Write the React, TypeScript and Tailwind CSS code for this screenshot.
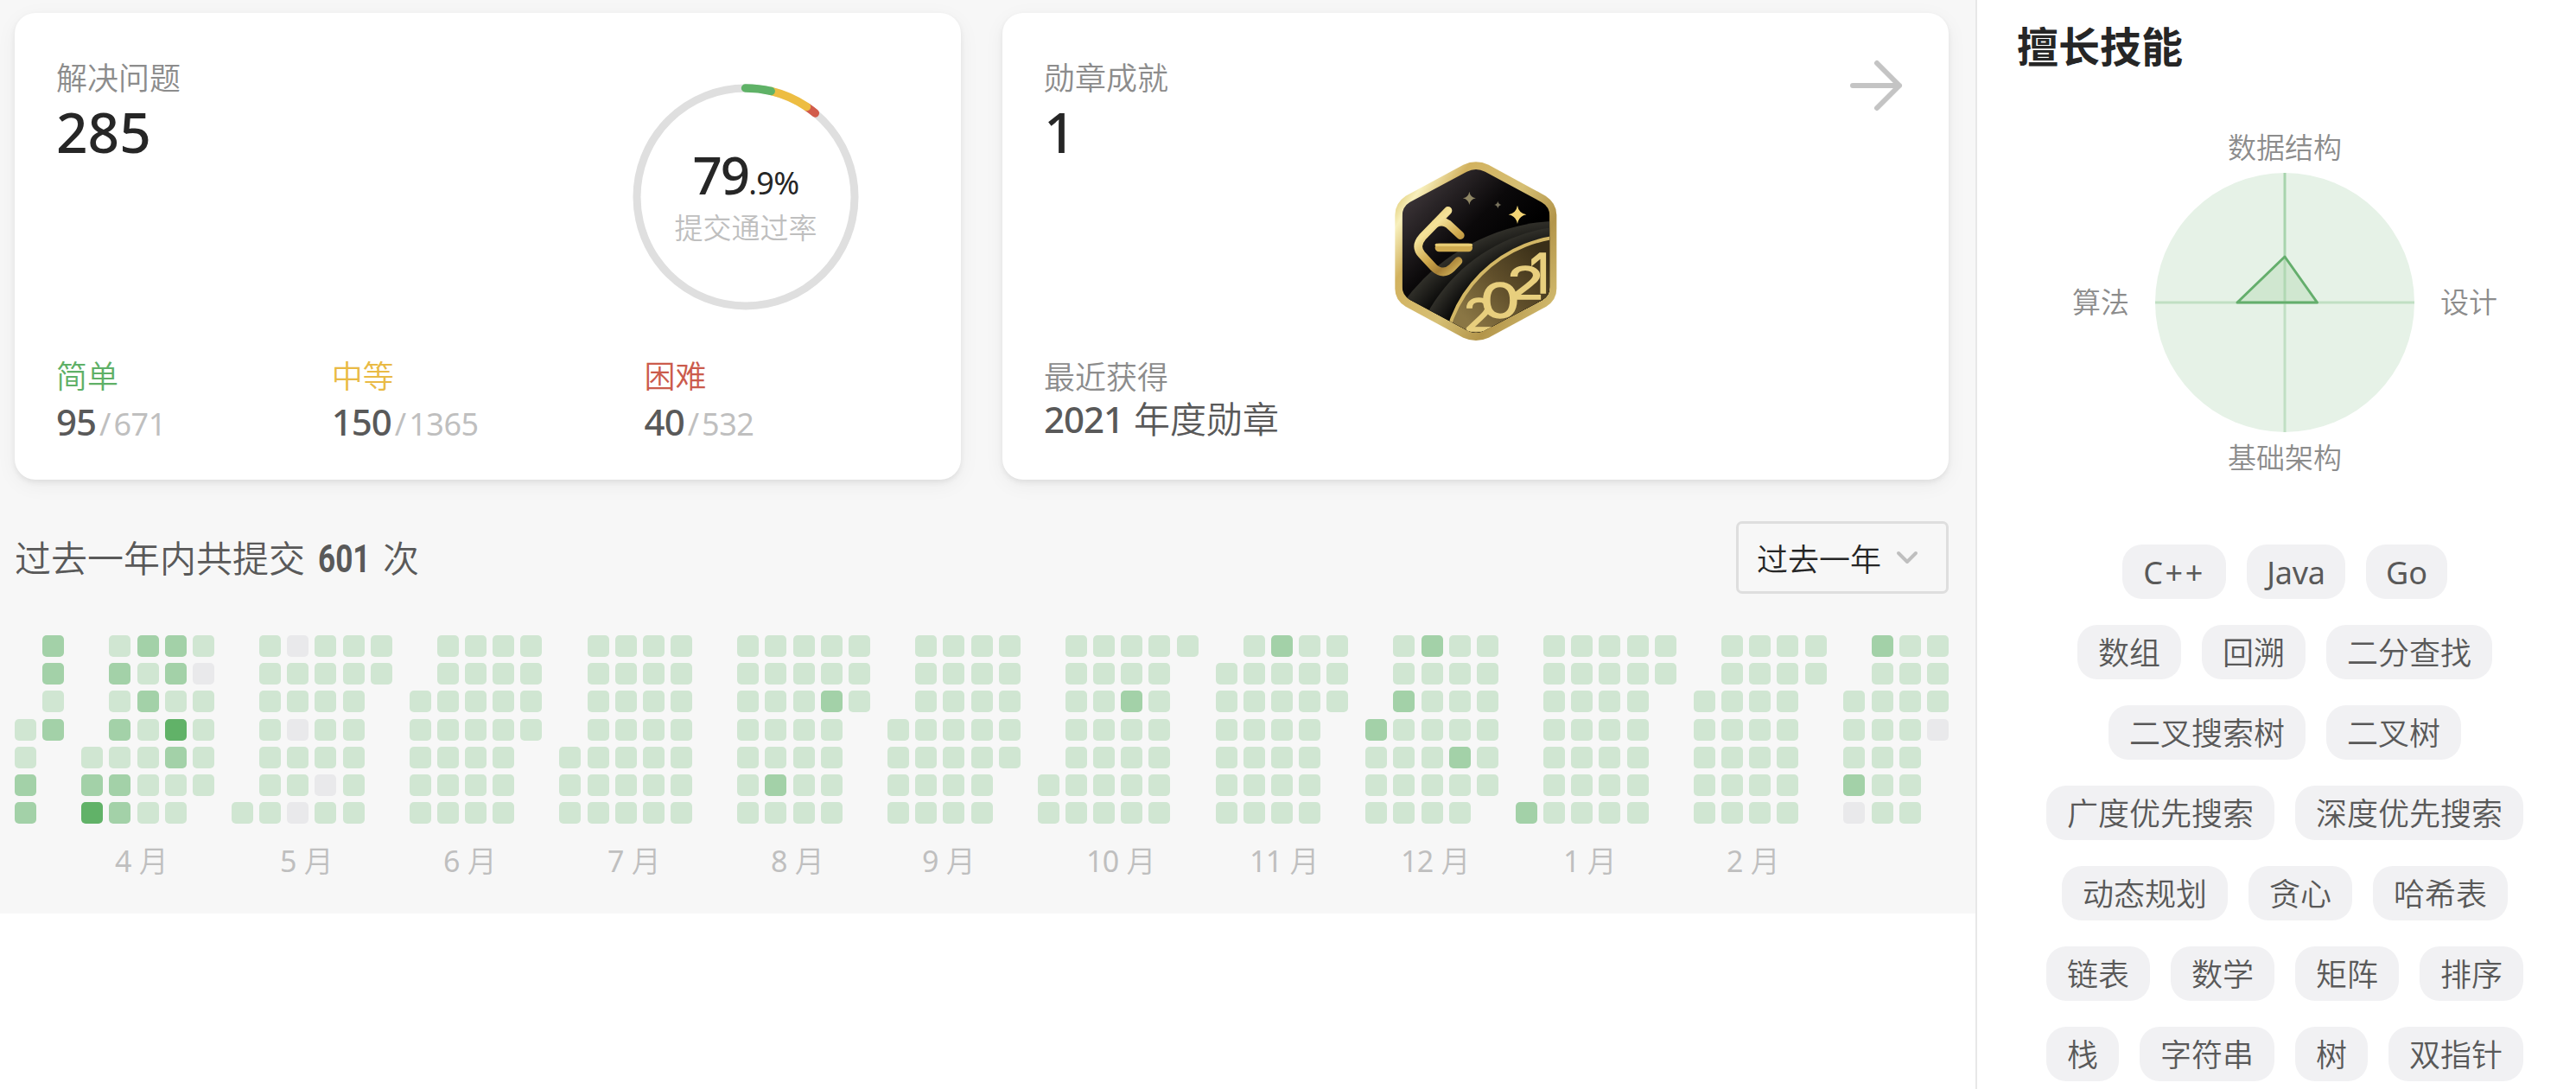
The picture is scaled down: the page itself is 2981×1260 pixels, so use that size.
import React from "react";

// One string per week, one character per weekday (Sunday first).
// "." = outside the month, 0 = no submissions, 1..3 = activity level.
const FULL = "1111111";
const MONTHS: string[][] = [
  ["...1122", "2212..."],
  ["....123", "1212122", "2121111", "2213211", "101111."],
  ["......1", FULL, "0110110", "1111101", FULL, "11....."],
  ["..11111", FULL, FULL, FULL, "1111..."],
  ["....111", FULL, FULL, FULL, FULL, "......."],
  [FULL, "1111121", FULL, "1121111", "111...."],
  ["...1111", FULL, FULL, FULL, "11111.."],
  [".....11", FULL, FULL, "1121111", FULL, "1......"],
  [".111111", FULL, "2111111", FULL, "111...."],
  ["...2111", "1121111", "2111111", "1111211", "111111."],
  ["......2", FULL, FULL, FULL, FULL, "11....."],
  ["..11111", FULL, FULL, FULL, "11....."],
  ["..11120", "2111111", FULL, "1110..."],
];

const LEVEL: Record<string, string> = {
  ".": "bg-transparent",
  "0": "bg-[#e9e9eb]",
  "1": "bg-[#d0e6d2]",
  "2": "bg-[#a3d1a8]",
  "3": "bg-[#61b268]",
};

// Month number and the distance to the start of the next label.
const LABELS: [number, number][] = [
  [4, 191],
  [5, 189],
  [6, 190],
  [7, 189],
  [8, 175],
  [9, 190],
  [10, 189],
  [11, 175],
  [12, 188],
  [1, 189],
  [2, 90],
];

const TAGS: string[][] = [
  ["C++", "Java", "Go"],
  ["数组", "回溯", "二分查找"],
  ["二叉搜索树", "二叉树"],
  ["广度优先搜索", "深度优先搜索"],
  ["动态规划", "贪心", "哈希表"],
  ["链表", "数学", "矩阵", "排序"],
  ["栈", "字符串", "树", "双指针"],
];

const LATIN_TAG: Record<string, string> = {
  "C++": "w-[120px] font-normal tracking-[2.6px]",
  Java: "w-[114px] font-normal tracking-[-0.3px]",
  Go: "w-[94px] font-normal",
};

const LEVELS = [
  { name: "简单", color: "text-[#5fb067]", done: 95, total: 671 },
  { name: "中等", color: "text-[#e9ba45]", done: 150, total: 1365 },
  { name: "困难", color: "text-[#cb5b4c]", done: 40, total: 532 },
];

function Arc({ from, to, color }: { from: number; to: number; color: string }) {
  const p = (deg: number) => {
    const a = (deg * Math.PI) / 180;
    return `${131 + 126 * Math.sin(a)} ${131 - 126 * Math.cos(a)}`;
  };
  return (
    <path d={`M${p(from)} A126 126 0 0 1 ${p(to)}`} fill="none" stroke={color} strokeWidth="9.5" strokeLinecap="round" />
  );
}

function Ring() {
  return (
    <div className="relative mt-[82px] mr-[70px] size-[262px]">
      <svg viewBox="0 0 262 262" className="absolute inset-0 size-full">
        <circle cx="131" cy="131" r="126" fill="none" stroke="#dfdfdf" strokeWidth="9" />
        <Arc from={34.5} to={39.6} color="#d15b4b" />
        <Arc from={13.4} to={34} color="#edbd42" />
        <Arc from={-0.2} to={13.4} color="#5fb267" />
      </svg>
      <div className="relative flex h-full flex-col items-center pt-[73px]">
        <div className="flex items-baseline leading-[64px] text-[#262626]">
          <span className="text-[60px] font-medium tracking-[-2px]">79</span>
          <span className="text-[36px] font-normal tracking-[-0.6px]">.9%</span>
        </div>
        <div className="text-[33px] leading-[40px] font-[350] text-[#bfbfbf]">提交通过率</div>
      </div>
    </div>
  );
}

function Star({ x, y, s, fill }: { x: number; y: number; s: number; fill: string }) {
  return (
    <path
      d="M0 -32 Q4 -6 31 0 Q4 6 0 32 Q-4 6 -31 0 Q-4 -6 0 -32Z"
      fill={fill}
      transform={`translate(${x} ${y}) scale(${s})`}
    />
  );
}

function Badge() {
  return (
    <svg viewBox="54 42 600 642" className="mt-[169px] h-[214px] w-[200px]">
      <defs>
        <linearGradient id="frame" x1="0" y1="0.2" x2="1" y2="0.9">
          <stop offset="0" stopColor="#e0cc78" />
          <stop offset="0.08" stopColor="#f8f0bd" />
          <stop offset="0.22" stopColor="#d2b25f" />
          <stop offset="0.5" stopColor="#d6bf74" />
          <stop offset="0.72" stopColor="#b3954a" />
          <stop offset="1" stopColor="#d9c377" />
        </linearGradient>
        <linearGradient id="night" x1="0.15" y1="0.1" x2="0.6" y2="0.6">
          <stop offset="0" stopColor="#3c3538" />
          <stop offset="0.6" stopColor="#0b090a" />
          <stop offset="1" stopColor="#000" />
        </linearGradient>
        <radialGradient id="band">
          <stop offset="0.86" stopColor="#060606" />
          <stop offset="1" stopColor="#302f29" />
        </radialGradient>
        <linearGradient id="planet" gradientUnits="userSpaceOnUse" x1="340" y1="620" x2="600" y2="380">
          <stop offset="0" stopColor="#8a7644" />
          <stop offset="0.5" stopColor="#5f4e2a" />
          <stop offset="1" stopColor="#3a2f18" />
        </linearGradient>
        <linearGradient id="gold" gradientUnits="userSpaceOnUse" x1="150" y1="240" x2="320" y2="430">
          <stop offset="0" stopColor="#e4c766" />
          <stop offset="0.25" stopColor="#f4e29a" />
          <stop offset="0.55" stopColor="#cfa84c" />
          <stop offset="0.75" stopColor="#a57f36" />
          <stop offset="1" stopColor="#e3c566" />
        </linearGradient>
        <clipPath id="inner">
          <path d="M322 86Q354 70 386 86L582 192Q610 208 610 240V486Q610 516 584 532L386 636Q354 654 322 636L124 530Q98 514 98 486V240Q98 208 124 192Z" />
        </clipPath>
      </defs>
      <path
        d="M310 62Q354 42 398 62L596 170Q634 195 634 236V492Q634 532 598 554L398 662Q354 682 310 662L110 554Q73 532 73 492V236Q73 195 110 170Z"
        fill="url(#frame)"
      />
      <g clipPath="url(#inner)">
        <rect x="90" y="60" width="530" height="600" fill="url(#night)" />
        <circle cx="661" cy="949" r="693" fill="url(#band)" />
        <circle cx="699" cy="861" r="587" fill="url(#band)" />
        <circle cx="690" cy="760" r="450" fill="url(#planet)" stroke="#d3b765" strokeWidth="12" />
        <g fill="#e8cf7e" stroke="#e8cf7e" strokeWidth="4" fontSize="155" className="font-[Inter]">
          <text transform="translate(310 638) scale(1.15 1)">2</text>
          <text transform="translate(368 594) scale(1.42 1.1)">0</text>
          <text transform="translate(460 528) scale(1.4 1.02)">2</text>
          <text transform="translate(541 508) scale(1.1 1.22)">1</text>
        </g>
      </g>
      <g fill="none" stroke="url(#gold)" strokeWidth="28" strokeLinecap="round" strokeLinejoin="round">
        <path d="M257 221L168 313Q140 345 166 374L207 418Q240 448 270 420L293 396" />
        <path d="M214 266Q238 254 258 268L300 307" />
      </g>
      <rect x="212" y="335" width="130" height="29" rx="14" fill="#cfab50" />
      <rect x="212" y="335" width="130" height="10" rx="5" fill="#e7cc74" />
      <Star x={498} y={235} s={1} fill="#f3d474" />
      <Star x={331} y={178} s={0.72} fill="#8f8664" />
      <Star x={430} y={201} s={0.4} fill="#77715c" />
    </svg>
  );
}

const CARD =
  "flex h-[540px] w-[1095px] flex-col rounded-[24px] bg-white px-[48px] shadow-[0_3px_6px_rgba(0,0,0,0.07),0_6px_24px_rgba(0,0,0,0.05)]";

function SolvedCard() {
  return (
    <section className={CARD}>
      <div className="flex items-start justify-between">
        <div className="pt-[56px]">
          <div className="text-[36px] leading-[40px] font-[350] text-[#8c8c8c]">解决问题</div>
          <div className="mt-[6px] text-[64px] leading-[72px] font-medium text-[#262626]">285</div>
        </div>
        <Ring />
      </div>
      <div className="mt-auto flex gap-[192px] pb-[40px]">
        {LEVELS.map((l) => (
          <div key={l.name}>
            <div className={`text-[36px] leading-[40px] font-[350] ${l.color}`}>{l.name}</div>
            <div className="mt-[8px] flex items-baseline leading-[48px]">
              <span className="text-[42px] font-medium tracking-[-1px] text-[#595959]">{l.done}</span>
              <span className="ml-[4px] text-[36px] text-[#bfbfbf]">
                /<span className="ml-[3px] tracking-[-0.5px]">{l.total}</span>
              </span>
            </div>
          </div>
        ))}
      </div>
    </section>
  );
}

function MedalCard() {
  return (
    <section className={CARD}>
      <div className="grid h-[383px] grid-cols-[1fr_auto_1fr] items-start">
        <div className="pt-[56px]">
          <div className="text-[36px] leading-[40px] font-[350] text-[#8c8c8c]">勋章成就</div>
          <div className="mt-[6px] text-[64px] leading-[72px] font-medium text-[#262626]">1</div>
        </div>
        <Badge />
        <svg viewBox="0 0 66 60" className="mt-[54px] mr-[3px] h-[60px] w-[66px] justify-self-end">
          <path
            d="M6 30H60M34 4L60 30L34 56"
            fill="none"
            stroke="#c4c4c4"
            strokeWidth="6"
            strokeLinecap="round"
            strokeLinejoin="round"
          />
        </svg>
      </div>
      <div className="mt-auto pb-[46px]">
        <div className="text-[36px] leading-[40px] font-[350] text-[#8c8c8c]">最近获得</div>
        <div className="mt-[4px] text-[42px] leading-[48px] font-[350] text-[#595959]">
          <span className="font-medium tracking-[-1px]">2021</span> <span className="ml-[1px]">年度勋章</span>
        </div>
      </div>
    </section>
  );
}

function Calendar() {
  return (
    <section className="mt-[48px] w-[2238px]">
      <div className="flex h-[84px] items-center justify-between">
        <h2 className="flex items-center pt-[2px] text-[42px] leading-[48px] font-[350] text-[#595959]">
          过去一年内共提交
          <span className="ml-[15px] w-[61px]">
            <span className="inline-block origin-left scale-x-[0.78] font-[Roboto] text-[45px] font-bold">601</span>
          </span>
          <span className="ml-[14px]">次</span>
        </h2>
        <button className="flex h-[84px] w-[246px] items-center rounded-[7px] border-[3px] border-[#dedede] pl-[21px] text-[36px] leading-[40px] font-[350] text-[#262626]">
          <span className="pt-[5px]">过去一年</span>
          <svg viewBox="0 0 28 18" className="ml-[16px] h-[18px] w-[28px]">
            <path d="M4 4L14 14L24 4" fill="none" stroke="#bfbfbf" strokeWidth="4" strokeLinecap="round" strokeLinejoin="round" />
          </svg>
        </button>
      </div>
      <div className="mt-[48px] flex justify-between">
        {MONTHS.map((weeks, m) => (
          <div key={m} className="flex gap-[7.2px]">
            {weeks.map((week, w) => (
              <div key={w} className="flex flex-col gap-[7.2px]">
                {week.split("").map((day, d) => (
                  <span key={d} className={`size-[25px] rounded-[5px] ${LEVEL[day]}`} />
                ))}
              </div>
            ))}
          </div>
        ))}
      </div>
      <div className="mt-[23px] flex pl-[116px] text-[34px] leading-[40px] font-[350] text-[#bfbfbf]">
        {LABELS.map(([month, width]) => (
          <span key={month} className="shrink-0" style={{ width }}>
            <span className="font-normal tracking-[-0.6px]">{month}</span> 月
          </span>
        ))}
      </div>
    </section>
  );
}

function Radar() {
  return (
    <div className="mt-[69px] flex flex-col items-center text-[33px] leading-[40px] font-[350] text-[#8c8c8c]">
      <span>数据结构</span>
      <div className="mt-[8px] flex items-center gap-[29px]">
        <span>算法</span>
        <svg viewBox="-151 -151 302 302" className="size-[302px]">
          <circle r="150" fill="#e6f2e7" />
          <path d="M-150 0H150M0 0V150" stroke="#c0dfc3" strokeWidth="3" />
          <path d="M0 -150V0" stroke="#a8d4ad" strokeWidth="3" />
          <path d="M-55 0L0 -53L37.5 0Z" fill="#b9dcb9" fillOpacity="0.5" stroke="#64ae6c" strokeWidth="3" strokeLinejoin="round" />
        </svg>
        <span>设计</span>
      </div>
      <span className="mt-[9px]">基础架构</span>
    </div>
  );
}

export default function App() {
  return (
    <div className="flex h-[1260px] w-[2981px] overflow-hidden bg-white font-['Noto_Sans','Noto_Sans_CJK_SC',sans-serif]">
      <main className="h-[1057px] w-[2286px] bg-[#f7f7f7] pt-[15px] pl-[17px]">
        <div className="flex gap-[48px]">
          <SolvedCard />
          <MedalCard />
        </div>
        <Calendar />
      </main>
      <aside className="h-full w-[695px] border-l-2 border-[#e8e8e8]">
        <h2 className="pt-[26px] pl-[46px] text-[48px] leading-[56px] font-bold text-[#262626]">擅长技能</h2>
        <div className="w-[712px]">
          <Radar />
          <div className="mt-[80px] flex flex-col gap-[30px]">
            {TAGS.map((row) => (
              <div key={row[0]} className="flex justify-center gap-[24px]">
                {row.map((tag) => (
                  <span
                    key={tag}
                    className={`flex h-[63px] items-center justify-center rounded-[23px] bg-[#f1f1f3] pt-[3px] text-[36px] leading-[40px] whitespace-nowrap text-[#595959] ${LATIN_TAG[tag] ?? "px-[24px] font-[350]"}`}
                  >
                    {tag}
                  </span>
                ))}
              </div>
            ))}
          </div>
        </div>
      </aside>
    </div>
  );
}
